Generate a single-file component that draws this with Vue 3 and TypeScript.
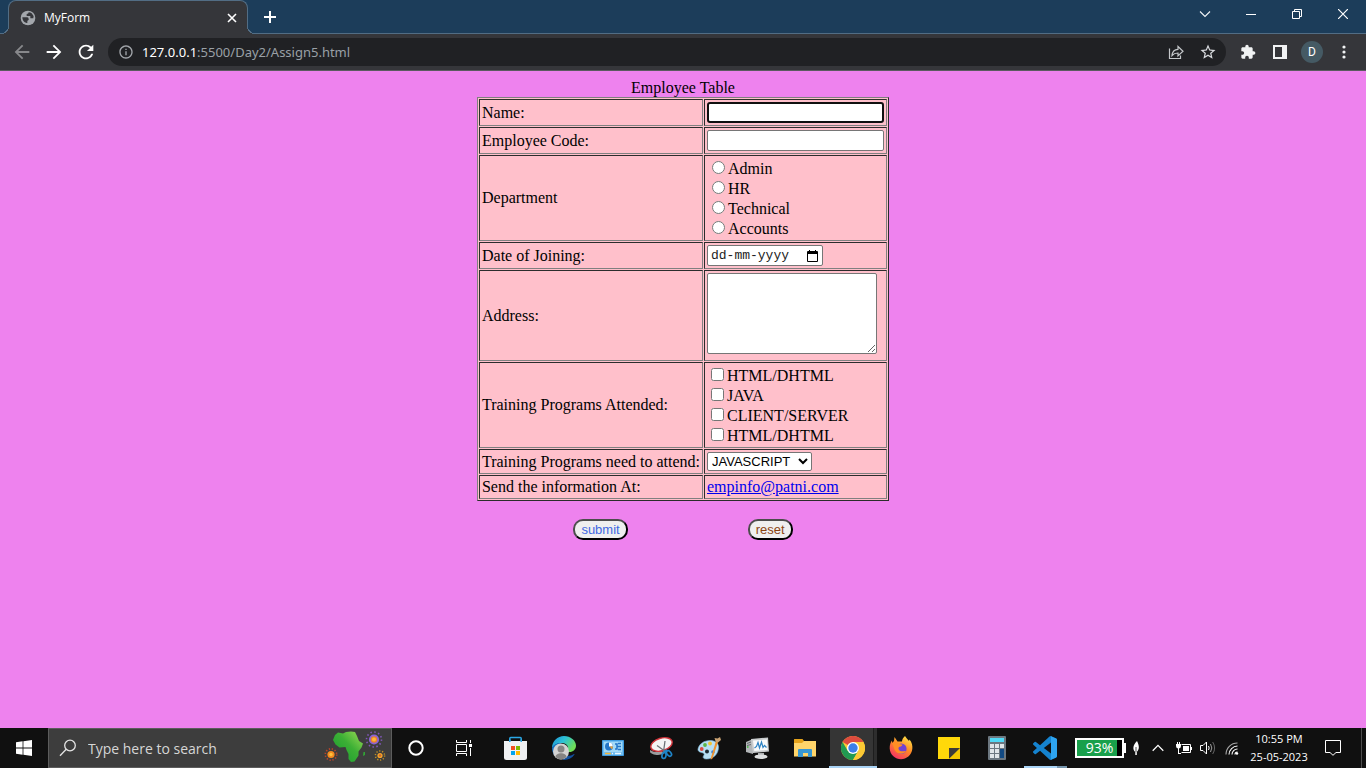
<script setup lang="ts">
import { ref } from 'vue'

const departments: string[] = ['Admin', 'HR', 'Technical', 'Accounts']
const trainings: string[] = ['HTML/DHTML', 'JAVA', 'CLIENT/SERVER', 'HTML/DHTML']
const programs: string[] = ['JAVASCRIPT']

const department = ref<string>('')
const attended = ref<number[]>([])
const program = ref<string>(programs[0])
</script>

<template>
  <div class="desktop">
    <header class="tabstrip">
      <div class="tab">
        <svg class="favicon" viewBox="0 0 24 24" aria-hidden="true">
          <circle cx="12" cy="12" r="11" fill="#a3a7ac" />
          <path d="M3.500 11l7.500 0q2 .5 2 2.500v1.500q-2 .3-2 2v2.500h-1Q3.500 18 3.500 11zM13 3.500q0 2.500-3 2.500v3h5.500v3.500h4.500q1-4.500-2.500-7.500-2-1.500-4.500-1.500z" fill="#35363a" />
        </svg>
        <span class="tab-title">MyForm</span>
        <button class="plain tab-close" type="button" aria-label="Close tab">
          <svg width="10" height="10" viewBox="0 0 10 10"><path d="M1 1l8 8M9 1l-8 8" stroke="#fff" stroke-width="1.600" /></svg>
        </button>
      </div>
      <button class="plain new-tab" type="button" aria-label="New tab">
        <svg width="12" height="12" viewBox="0 0 12 12"><path d="M6 0v12M0 6h12" stroke="#fff" stroke-width="2" /></svg>
      </button>
      <div class="window-controls">
        <button class="plain" type="button" aria-label="Search tabs">
          <svg width="12" height="12" viewBox="0 0 12 12"><path d="M1 3.500l5 5 5-5" fill="none" stroke="#f2f5f7" stroke-width="1.100" /></svg>
        </button>
        <button class="plain" type="button" aria-label="Minimize">
          <svg width="10" height="10" viewBox="0 0 10 10"><path d="M0 5.500h10" stroke="#fff" /></svg>
        </button>
        <button class="plain" type="button" aria-label="Restore">
          <svg width="10" height="10" viewBox="0 0 10 10"><path d="M.5 2.500h7v7h-7zM2.500 2.500v-2h7v7h-2" fill="none" stroke="#fff" /></svg>
        </button>
        <button class="plain" type="button" aria-label="Close">
          <svg width="10" height="10" viewBox="0 0 10 10"><path d="M0 0l10 10M10 0L0 10" stroke="#fff" stroke-width="1.200" /></svg>
        </button>
      </div>
    </header>

    <nav class="toolbar">
      <button class="plain tool" type="button" aria-label="Back">
        <svg width="22" height="22" viewBox="0 0 24 24" fill="#87888b"><path d="M20 11H7.830l5.590-5.590L12 4l-8 8 8 8 1.410-1.410L7.830 13H20v-2z" /></svg>
      </button>
      <button class="plain tool" type="button" aria-label="Forward">
        <svg width="22" height="22" viewBox="0 0 24 24" fill="#fff"><path d="M12 4l-1.410 1.410L16.170 11H4v2h12.170l-5.580 5.590L12 20l8-8z" /></svg>
      </button>
      <button class="plain tool" type="button" aria-label="Reload">
        <svg width="22" height="22" viewBox="0 0 24 24" fill="#fff"><path d="M17.650 6.350C16.200 4.900 14.210 4 12 4c-4.420 0-7.990 3.580-7.990 8s3.570 8 7.990 8c3.730 0 6.840-2.550 7.730-6h-2.080c-.82 2.330-3.040 4-5.650 4-3.310 0-6-2.690-6-6s2.690-6 6-6c1.660 0 3.140.69 4.220 1.780L13 11h7V4l-2.350 2.350z" /></svg>
      </button>
      <div class="omnibox">
        <button class="plain" type="button" aria-label="Site information">
          <svg width="16" height="16" viewBox="0 0 24 24" fill="#a3a7ac"><path d="M11 7h2v2h-2zm0 4h2v6h-2zm1-9C6.480 2 2 6.480 2 12s4.480 10 10 10 10-4.480 10-10S17.520 2 12 2zm0 18c-4.410 0-8-3.590-8-8s3.590-8 8-8 8 3.590 8 8-3.590 8-8 8z" /></svg>
        </button>
        <button class="plain url" type="button"><span class="host">127.0.0.1</span>:5500/Day2/Assign5.html</button>
        <button class="plain tool" type="button" aria-label="Share">
          <svg width="16" height="16" viewBox="0 0 16 16" fill="none" stroke="#c4c7ca" stroke-width="1.200"><path d="M1.500 4.500v10h11V11.500" /><path d="M4 11.500c.3-3.700 2-6 6-6.200V2.500l5 4.700-5 4.700V9c-2.800 0-4.500.7-6 2.500z" /></svg>
        </button>
        <button class="plain tool" type="button" aria-label="Bookmark">
          <svg width="18" height="18" viewBox="0 0 24 24" fill="#dadce0"><path d="M22 9.240l-7.190-.62L12 2 9.190 8.630 2 9.240l5.460 4.730L5.820 21 12 17.270 18.180 21l-1.630-7.030L22 9.240zM12 15.400l-3.760 2.270 1-4.280-3.320-2.880 4.380-.38L12 6.100l1.710 4.040 4.380.38-3.320 2.880 1 4.280L12 15.400z" /></svg>
        </button>
      </div>
      <button class="plain tool" type="button" aria-label="Extensions">
        <svg width="16" height="16" viewBox="0 0 24 24" fill="#f1f3f4"><path d="M20.500 11H19V7c0-1.100-.9-2-2-2h-4V3.500C13 2.120 11.880 1 10.500 1S8 2.120 8 3.500V5H4c-1.100 0-1.990.9-1.990 2v3.800H3.500c1.490 0 2.700 1.210 2.700 2.700s-1.210 2.700-2.700 2.700H2V20c0 1.100.9 2 2 2h3.800v-1.500c0-1.490 1.210-2.700 2.700-2.700 1.490 0 2.700 1.210 2.700 2.700V22H17c1.100 0 2-.9 2-2v-4h1.500c1.380 0 2.500-1.120 2.500-2.500S21.880 11 20.500 11z" /></svg>
      </button>
      <button class="plain tool" type="button" aria-label="Side panel">
        <svg width="14" height="14" viewBox="0 0 14 14"><path d="M0 0h14v14H0zM2 2v10h7V2z" fill="#f1f3f4" fill-rule="evenodd" /></svg>
      </button>
      <button class="plain tool" type="button" aria-label="Profile"><span class="avatar">D</span></button>
      <button class="plain tool" type="button" aria-label="Menu">
        <svg width="4" height="14" viewBox="0 0 4 14" fill="#f1f3f4"><circle cx="2" cy="2" r="1.600" /><circle cx="2" cy="7" r="1.600" /><circle cx="2" cy="12" r="1.600" /></svg>
      </button>
    </nav>

    <main class="page">
      <form @submit.prevent>
        <table class="employee">
          <caption>Employee Table</caption>
          <tbody>
            <tr>
              <td><label for="name">Name:</label></td>
              <td><input id="name" class="field focused" type="text" /></td>
            </tr>
            <tr>
              <td><label for="code">Employee Code:</label></td>
              <td><input id="code" class="field" type="text" /></td>
            </tr>
            <tr>
              <td>Department</td>
              <td>
                <label v-for="d in departments" :key="d" class="option">
                  <input v-model="department" type="radio" name="department" :value="d" />{{ d }}
                </label>
              </td>
            </tr>
            <tr>
              <td><label for="joined">Date of Joining:</label></td>
              <td>
                <div class="date">
                  <input id="joined" type="text" placeholder="dd-mm-yyyy" />
                  <button class="plain" type="button" aria-label="Open calendar">
                    <svg width="11" height="12" viewBox="0 0 11 12"><path d="M1 1h1V0h1v1h5V0h1v1h1q1 0 1 1v9q0 1-1 1H1q-1 0-1-1V2q0-1 1-1zM1 4v7h9V4z" fill="#000" fill-rule="evenodd" /></svg>
                  </button>
                </div>
              </td>
            </tr>
            <tr>
              <td><label for="address">Address:</label></td>
              <td><textarea id="address"></textarea></td>
            </tr>
            <tr>
              <td>Training Programs Attended:</td>
              <td>
                <label v-for="(t, i) in trainings" :key="i" class="option">
                  <input v-model="attended" type="checkbox" :value="i" />{{ t }}
                </label>
              </td>
            </tr>
            <tr>
              <td><label for="program">Training Programs need to attend:</label></td>
              <td>
                <select id="program" v-model="program">
                  <option v-for="p in programs" :key="p" :value="p">{{ p }}</option>
                </select>
              </td>
            </tr>
            <tr>
              <td>Send the information At:</td>
              <td><a href="mailto:empinfo@patni.com">empinfo@patni.com</a></td>
            </tr>
          </tbody>
        </table>
        <div class="actions">
          <button class="pill submit" type="submit">submit</button>
          <button class="pill reset" type="reset">reset</button>
        </div>
      </form>
    </main>

    <footer class="taskbar">
      <button class="plain task" type="button" aria-label="Start">
        <svg width="16" height="16" viewBox="0 0 16 16" fill="#fff"><path d="M0 2.200L6.600 1.300v6.300H0zM7.400 1.200L16 0v7.600H7.400zM0 8.400h6.600v6.300L0 13.800zM7.400 8.400H16V16l-8.600-1.200z" /></svg>
      </button>
      <div class="search">
        <svg width="18" height="18" viewBox="0 0 18 18" fill="none" stroke="#e4e4e4" stroke-width="1.300"><circle cx="11" cy="6.500" r="5.300" /><path d="M7.200 10.300L1 16.800" /></svg>
        <input type="text" placeholder="Type here to search" aria-label="Search" />
        <svg width="64" height="34" viewBox="0 0 64 34" aria-hidden="true">
          <defs><linearGradient id="land" x1="0" y1="1" x2="1" y2="0"><stop offset="0" stop-color="#129a2e" /><stop offset=".55" stop-color="#3caf35" /><stop offset="1" stop-color="#9ddb55" /></linearGradient></defs>
          <path d="M9 9l2-5 3-2.500 5 1L22 1l5-.5 4 .5 2 4 2 5 4 2.500-1.500 4-3 4v4l-4 6-3.500.5-2.500-3v-5l-2-4-1-3-6 .5-4-3z" fill="url(#land)" />
          <path d="M39.500 21l1.500 0v3l-2 1z" fill="#31a535" />
          <circle cx="50" cy="8.500" r="7.500" fill="none" stroke="#8057b8" stroke-width="1.600" stroke-dasharray="1.500 2.430" />
          <circle cx="50" cy="8.500" r="4.200" fill="#e8842c" stroke="#8b63d6" stroke-width="1.800" /><circle cx="50" cy="8.500" r="2" fill="#ffb637" />
          <circle cx="7" cy="23.500" r="5.700" fill="none" stroke="#b9452a" stroke-width="1.600" stroke-dasharray="1.300 1.690" />
          <circle cx="7" cy="23.500" r="3.600" fill="#f58a1f" /><circle cx="7" cy="23.500" r="1.700" fill="#ffc13d" />
          <circle cx="56" cy="24.500" r="4.600" fill="none" stroke="#c39124" stroke-width="1.500" stroke-dasharray="1.200 1.700" />
          <circle cx="56" cy="24.500" r="2.600" fill="#f3a52c" /><circle cx="56" cy="24.500" r="1.200" fill="#d0662a" />
        </svg>
      </div>
      <button class="plain task" type="button" aria-label="Cortana">
        <svg width="16" height="16" viewBox="0 0 16 16"><circle cx="8" cy="8" r="6.700" fill="none" stroke="#fff" stroke-width="2" /></svg>
      </button>
      <button class="plain task" type="button" aria-label="Task view">
        <svg width="16" height="16" viewBox="0 0 16 16" fill="none" stroke="#fff"><path d="M.5 0v2.500h10V0M.5 16v-2.500h10V16M.5 4.500h10v7H.5zM14.500 0v3M14.500 8v8" /><path d="M13 4h3v3h-3z" fill="#fff" stroke="none" /></svg>
      </button>

      <div class="pinned">
        <button class="plain task" type="button" aria-label="Microsoft Store">
          <svg width="24" height="24" viewBox="0 0 24 24"><path d="M6.800 7V2.500c0-.6.300-.9.900-.9h9.600c.6 0 .9.300.9.900V7" fill="none" stroke="#2ba8e6" stroke-width="1.500" /><path d="M1 5h23v16.500q0 2.500-2.500 2.500h-18Q1 24 1 21.500z" fill="#f0f1f3" /><path d="M6.800 6V3.500M18.200 6V3.500" stroke="#2ba8e6" stroke-width="1.500" /><path fill="#f25022" d="M8 10h4v4H8z" /><path fill="#7fba00" d="M13 10h4v4h-4z" /><path fill="#00a4ef" d="M8 15h4v4H8z" /><path fill="#ffb900" d="M13 15h4v4h-4z" /></svg>
        </button>
        <button class="plain task" type="button" aria-label="Microsoft Edge">
          <svg width="24" height="24" viewBox="0 0 24 24"><defs><linearGradient id="edge" x1="0" y1="0" x2="1" y2=".5"><stop offset="0" stop-color="#1c8fd8" /><stop offset=".5" stop-color="#2dc2d6" /><stop offset="1" stop-color="#6fdd56" /></linearGradient></defs><path d="M0 12C0 5 5.500 0 12 0s12 4.500 12 9.500c0 4-3 6.500-6.500 6.500-1.500 0-2.500-.5-2.500-1.300 0-1 1-1.200 1-3C16 9 13 7 9.500 7 5 7 1 10 0 12z" fill="url(#edge)" /><path d="M0 12c1-3 5-5 9-5-2 2-3 4-2 9l2 7C3.500 22 0 17.500 0 12z" fill="#1670c4" /><path d="M12 19c3 1.500 7 1 10-1 .5 0 .6.4.3.800-2.500 3.600-6.500 5.400-11.300 5.200z" fill="#124f9c" /><circle cx="9" cy="15.500" r="8" fill="#d4d3d2" /><circle cx="9" cy="13" r="3.500" fill="#858483" /><path d="M3.500 21c.3-5 10.700-5 11 0-3 3.200-8 3.200-11 0z" fill="#858483" /></svg>
        </button>
        <button class="plain task" type="button" aria-label="Control Panel">
          <svg width="24" height="24" viewBox="0 0 24 24"><path d="M1.500 4.500h21v15h-21z" fill="#71bdf0" stroke="#3d9adf" /><path d="M3 6h18v10H3z" fill="#a2daf8" /><circle cx="8" cy="10.500" r="4" fill="#2476c8" /><path d="M8 10.500v-4a4 4 0 0 1 3.800 4z" fill="#fff" /><path d="M8.500 10.500h3.300a4 4 0 0 1-1 2.800z" fill="#f3a12f" /><path d="M14 8h2v5h-2M16 10.500h4M17 7.500h3M17 13.500h3" fill="none" stroke="#2476c8" stroke-width="1.500" /><path d="M4 17.500h6" stroke="#f4b63e" stroke-width="1.500" /><path d="M11 17.500h1M14 17.500h6" stroke="#e9f7ff" stroke-width="1.500" /></svg>
        </button>
      </div>
      <button class="plain task" type="button" aria-label="Snipping Tool">
        <svg width="24" height="24" viewBox="0 0 24 24"><path d="M1 14c3 2 7 3 12 1l2 3-6 1c-4 0-7.500-1.500-8-3z" fill="#9a9c9e" /><ellipse cx="12.500" cy="8.500" rx="11" ry="6.300" transform="rotate(-17 12.500 8.500)" fill="#f4f4f4" stroke="#d2343b" stroke-width="1.400" /><path d="M8 9.500l9 6.500M16 5l-1.500 11" stroke="#6e7377" stroke-width="1.300" fill="none" /><g fill="none" stroke="#1f84c8" stroke-width="1.700"><ellipse cx="15" cy="19.500" rx="2" ry="3" transform="rotate(12 15 19.500)" /><ellipse cx="20" cy="17.500" rx="2" ry="3" transform="rotate(-40 20 17.500)" /><path d="M15 16l3-2" /></g></svg>
      </button>
      <button class="plain task" type="button" aria-label="Paint">
        <svg width="24" height="24" viewBox="0 0 24 24"><path d="M1 13C2 8 7 4.500 13 4.500c5 0 8.500 2.500 8.500 6.500 0 7-5 12-12 12-3 0-4-1.500-3-3s1-2.500-.5-3S.5 16 1 13z" fill="#b7dff4" stroke="#7fbbdd" stroke-width=".6" /><circle cx="4.700" cy="13" r="1.900" fill="#dc4b43" /><circle cx="8" cy="9" r="1.900" fill="#5bb545" /><circle cx="13" cy="7.500" r="1.900" fill="#f2c230" /><circle cx="10" cy="15.500" r="2" fill="#1c2a33" /><circle cx="16" cy="16" r="1.800" fill="#3d7fd0" /><path d="M19 5l2 1-5.500 16.500-1.800 1.200.3-2.200z" fill="#ee9330" /><path d="M17.500 2l3 .5 2.500-1.500 1 3-3 2.500-2.300-.7z" fill="#c9a273" /></svg>
      </button>
      <button class="plain task" type="button" aria-label="Task Manager">
        <svg width="24" height="24" viewBox="0 0 24 24"><path d="M1 6l7-3v15l-7-2z" fill="#b3b6b8" /><path d="M2 7.500l4-1.500M2 9.500l4-1" stroke="#656a6d" /><path d="M2 11h1.500" stroke="#38b838" stroke-width="1.500" /><path d="M6 3l17-1.500 1 14L8 17z" fill="#c9ccce" /><path d="M8 4.500l14-1 .7 10.500L9.300 15z" fill="#fafafa" /><path d="M9.500 12l2-1.500 1.500-4 1.500 5.500 2-6 1.500 5.500 1.500-2 2 2" fill="none" stroke="#2d83c4" stroke-width="1.200" /><path d="M13 17h6v3h-6z" fill="#aeb1b3" /><ellipse cx="16" cy="20.700" rx="6.500" ry="2.300" fill="#dddfe0" /></svg>
      </button>
      <button class="plain task" type="button" aria-label="File Explorer">
        <svg width="24" height="24" viewBox="0 0 24 24"><path d="M1 3.500q0-.5.500-.5h8l1.500 2h11q1 0 1 1v4H1z" fill="#e5a21b" /><path d="M1 7h8l2-2h12v15.500H1z" fill="#ffd56b" /><path d="M5 21v-7q0-1 1-1h12q1 0 1 1v7h-4v-4h-5v4z" fill="#3797d3" /></svg>
      </button>
      <button class="plain task active" type="button" aria-label="Google Chrome">
        <svg width="24" height="24" viewBox="0 0 24 24"><circle cx="12" cy="12" r="12" fill="#fcc934" /><path d="M12 12L1.600 6A12 12 0 0 1 22.400 6H12z" fill="#dd4b3e" /><path d="M1.600 6A12 12 0 0 0 12 24l5.200-9L12 12 6.800 15z" fill="#219a52" /><path d="M12 6h10.400A12 12 0 0 1 12 24l5.200-9z" fill="#fcc934" /><circle cx="12" cy="12" r="6" fill="#fff" /><circle cx="12" cy="12" r="4.700" fill="#3c7ee8" /></svg>
      </button>
      <button class="plain task" type="button" aria-label="Firefox">
        <svg width="24" height="24" viewBox="0 0 24 24"><defs><linearGradient id="fox" x1=".8" y1="0" x2=".2" y2="1"><stop offset="0" stop-color="#ffe646" /><stop offset=".45" stop-color="#ff8a26" /><stop offset="1" stop-color="#f5296a" /></linearGradient></defs><path d="M16 0c1.500 2.200 2.500 3.200 4 5l.5-1.500C23 6.500 23.700 10 23.300 13 22.500 19 17.500 23.300 12 23.300S1 19 .7 12.500C.6 9 1.500 6.500 3 4.500L3.200 7 5 5l.5-4 3 4.500h4.500C13 3.500 14.300 1.300 16 0z" fill="url(#fox)" /><circle cx="12.300" cy="12.800" r="5.300" fill="#7142d2" /><path d="M3 7c3-1.500 5.500-1 7 1l3.500.5c-.5 2-2.500 2.200-3.500 2.500-1.200 1.300-.5 3.500 2 4.200 2 .5 3.500-.7 5-.2-1.200 3-8 4.300-11-.5C4.500 12 4.500 9 3 7z" fill="#ff8d24" /></svg>
      </button>
      <button class="plain task" type="button" aria-label="Sticky Notes">
        <svg width="24" height="24" viewBox="0 0 24 24"><path d="M1 1h22v22H1z" fill="#ffd80a" /><path d="M12 12h11v1L12 23z" fill="#3b3a38" /><path d="M23 12v11H12z" fill="#f2c600" /></svg>
      </button>
      <button class="plain task" type="button" aria-label="Calculator">
        <svg width="24" height="24" viewBox="0 0 24 24"><rect x="3" width="18" height="24" rx="1" fill="#6c7780" /><path d="M5 2h14v4H5z" fill="#50d9f6" /><path d="M5 8h4v4H5zM10 8h4v4h-4zM15 8h4v4h-4zM5 13h4v4H5zM10 13h4v4h-4zM5 18h4v4H5zM10 18h4v4h-4z" fill="#e0e5e8" /><path d="M15 13h4v9h-4z" fill="#124a83" /></svg>
      </button>
      <button class="plain task running" type="button" aria-label="Visual Studio Code">
        <svg width="24" height="24" viewBox="0 0 24 24"><path d="M23.150 2.587L18.210.21a1.494 1.494 0 0 0-1.705.29l-9.460 8.630-4.120-3.128a.999.999 0 0 0-1.276.057L.327 7.261A1 1 0 0 0 .326 8.740L3.899 12 .326 15.260a1 1 0 0 0 .001 1.479L1.650 17.940a.999.999 0 0 0 1.276.057l4.120-3.128 9.460 8.630a1.492 1.492 0 0 0 1.704.29l4.942-2.377A1.500 1.500 0 0 0 24 20.060V3.939a1.500 1.500 0 0 0-.85-1.352zm-5.146 14.861L10.826 12l7.178-5.448v10.896z" fill="#1583cf" /><path d="M18 .2l5.150 2.387q.85.500.85 1.352V20.060q0 .9-.85 1.352L18 23.800z" fill="#2ea4f0" /></svg>
      </button>

      <div class="tray">
        <div class="battery"><span class="charge">93%</span></div>
        <svg class="leaf" width="8" height="14" viewBox="0 0 8 14" fill="#fff"><path d="M5 0c2 4 3 8-.2 11V14H3.300v-3C.2 8.500 1 4 5 0z" /><path d="M4 6v5" stroke="#101010" stroke-width=".7" /></svg>
        <button class="plain chevron" type="button" aria-label="Show hidden icons">
          <svg width="12" height="8" viewBox="0 0 12 8"><path d="M.7 6.700L6 1.400l5.300 5.300" fill="none" stroke="#fff" stroke-width="1.300" /></svg>
        </button>
        <button class="plain" type="button" aria-label="Battery">
          <svg width="16" height="12" viewBox="0 0 16 12"><path d="M5.500 2.500h9v8h-9" fill="none" stroke="#fff" /><path d="M7 4h6v5H7zM15 5h1v3h-1zM0 2h5v2q0 2-2 2.500V11h2v1H2V6.500Q0 6 0 4zM1 0h1v2H1zM3 0h1v2H3z" fill="#fff" /></svg>
        </button>
        <button class="plain" type="button" aria-label="Volume">
          <svg width="16" height="14" viewBox="0 0 16 14" fill="none" stroke="#fff"><path d="M.5 4.500h2.500L6.500 1v12L3 9.500H.5z" /><path d="M8.500 5q1.300 2 0 4" /><path d="M10.500 3q2.600 4 0 8" stroke="#a0a0a0" /><path d="M12.700 1q3.800 6 0 12" stroke="#666" /></svg>
        </button>
        <button class="plain" type="button" aria-label="Network">
          <svg width="14" height="14" viewBox="0 0 14 14" fill="none" stroke="#fff" stroke-width="1.100"><path d="M1 13.500C1 7 6 2 12.500 2" stroke="#a8a8a8" /><path d="M4 13.500C4 9 8 5 12.500 5M7 13.500C7 10.500 9.500 8 12.500 8M10 13.500c0-1.500 1-2.500 2.500-2.500" /><circle cx="12" cy="12.500" r="1.200" fill="#fff" stroke="none" /></svg>
        </button>
        <button class="plain clock" type="button"><span>10:55 PM</span><span>25-05-2023</span></button>
        <button class="plain notify" type="button" aria-label="Notifications">
          <svg width="16" height="16" viewBox="0 0 16 16"><path d="M.5.500h15v12H11L8 15.300 5 12.500H.5z" fill="none" stroke="#fff" /></svg>
        </button>
      </div>
    </footer>
  </div>
</template>

<style>
body {
  margin: 0;
}
</style>

<style scoped>
.desktop {
  display: flex;
  flex-direction: column;
  min-height: 100vh;
  background: violet;
  font-family: "Open Sans", "Noto Sans", sans-serif;
}
.desktop * {
  box-sizing: border-box;
}
svg {
  display: block;
  flex: none;
}
.plain {
  display: flex;
  align-items: center;
  justify-content: center;
  padding: 0;
  border: 0;
  background: none;
  color: inherit;
  font: inherit;
}

/* Tab strip */
.tabstrip {
  display: flex;
  height: 34px;
  padding-left: 8px;
  background: #1c3d5a;
  box-shadow: inset 0 -1px #526d84;
}
.tab {
  position: relative;
  display: flex;
  align-items: center;
  width: 240px;
  padding: 0 10px 0 11px;
  border: 1px solid #526d84;
  border-bottom: 0;
  border-radius: 8px 8px 0 0;
  background: #35363a;
  color: #fff;
}
.tab::before,
.tab::after {
  content: "";
  position: absolute;
  bottom: 0;
  width: 8px;
  height: 8px;
}
.tab::before {
  left: -8px;
  background: radial-gradient(circle at 0 0, #1c3d5a 7px, #526d84 7px 8px, #35363a 8px);
}
.tab::after {
  right: -8px;
  background: radial-gradient(circle at 100% 0, #1c3d5a 7px, #526d84 7px 8px, #35363a 8px);
}
.favicon {
  width: 16px;
  height: 16px;
}
.tab-title {
  flex: 1;
  padding-left: 8px;
  font-size: 12px;
}
.new-tab {
  width: 28px;
  margin-left: 8px;
}
.window-controls {
  display: flex;
  height: 28px;
  margin-left: auto;
}
.window-controls .plain {
  width: 46px;
}

/* Toolbar */
.toolbar {
  display: flex;
  align-items: center;
  height: 37px;
  padding: 0 6px;
  border-bottom: 1px solid #5b5a60;
  background: #35363a;
}
.tool {
  width: 32px;
  height: 28px;
}
.omnibox {
  display: flex;
  flex: 1;
  align-items: center;
  height: 28px;
  margin: 0 6px;
  padding: 0 2px 0 10px;
  border-radius: 14px;
  background: #202124;
}
.url {
  flex: 1;
  justify-content: flex-start;
  padding-left: 8px;
  color: #9aa0a6;
  font-size: 13px;
  font-family: "Noto Sans", "Open Sans", sans-serif;
}
.host {
  color: #fff;
}
.avatar {
  width: 22px;
  height: 22px;
  border-radius: 50%;
  background: #455a64;
  color: #fff;
  font: 12px/22px Roboto, sans-serif;
}

/* Employee form */
.page {
  flex: 1;
  padding: 8px;
  color: #000;
  font: 16px/18px "Liberation Serif", serif;
}
.employee {
  margin: 0 auto;
  border: 1px solid;
  border-color: #808080 #2c2c2c #2c2c2c #808080;
  border-spacing: 1px;
  background: pink;
}
.employee td {
  padding: 2px;
  border: 1px solid;
  border-color: #2c2c2c #808080 #808080 #2c2c2c;
}
.field,
.date,
textarea,
select {
  display: block;
  margin: 0;
  border: 1px solid #767676;
  border-radius: 2px;
  background: #fff;
}
.field {
  width: 177px;
  height: 21px;
}
.focused,
.focused:focus {
  border: 2px solid #101010;
  border-radius: 3px;
  outline: none;
}
.option {
  display: flex;
  align-items: flex-start;
  height: 20px;
  line-height: 22px;
}
.option input {
  width: 13px;
  height: 13px;
  margin: 3px 3px 0 4px;
}
.option input[type="radio"] {
  margin-left: 5px;
}
.date {
  display: flex;
  align-items: center;
  width: 116px;
  height: 21px;
  padding: 0 4px 0 3px;
}
.date input {
  flex: 1;
  min-width: 0;
  padding: 0;
  border: 0;
  outline: none;
  font: 13px "Liberation Mono", monospace;
}
.date input::placeholder {
  color: #222;
}
textarea {
  width: 170px;
  height: 81px;
  margin-bottom: 4px;
}
select {
  width: 105px;
  height: 19px;
  padding: 0;
  color: #000;
  font: 13px "Liberation Sans", sans-serif;
}
a {
  color: #0000ee;
}
.actions {
  display: flex;
  justify-content: center;
  gap: 120px;
  margin-top: 18px;
}
.pill {
  height: 21px;
  padding: 0 6px;
  border: 2px solid;
  border-color: #4c4c4c #000 #000 #4c4c4c;
  border-radius: 10px;
  background: #efefef;
  font: 13px "Liberation Sans", sans-serif;
}
.submit {
  color: royalblue;
}
.reset {
  color: saddlebrown;
}

/* Taskbar */
.taskbar {
  display: flex;
  height: 40px;
  background: #101010;
  color: #fff;
}
.task {
  flex: none;
  width: 48px;
  height: 40px;
}
.search {
  display: flex;
  align-items: center;
  width: 344px;
  padding: 0 3px 0 10px;
  border: 1px solid #5c5c5c;
  background: #3d3d3d;
}
.search input {
  flex: 1;
  min-width: 0;
  padding: 0 0 0 11px;
  border: 0;
  outline: none;
  background: none;
  color: #fff;
  font: 14px "Open Sans", sans-serif;
}
.search input::placeholder {
  color: #d6d6d6;
}
.pinned {
  display: flex;
  gap: 1px;
  margin-left: 3px;
}
.active {
  border-bottom: 2px solid #a9d3f5;
  background: linear-gradient(90deg, #101010 1px, #353535 1px 44px, #1d1d1d 44px 45px, #2d2d2d 45px);
  padding-top: 2px;
}
.running {
  padding-top: 2px;
  border-bottom: 2px solid;
  border-image: linear-gradient(90deg, transparent 5px, #a9d3f5 5px 35px, #7595ad 35px 44px, transparent 44px) 2;
}
.tray {
  display: flex;
  align-items: center;
  margin-left: auto;
  padding-right: 14px;
  background: linear-gradient(#4d4d4d, #4d4d4d) right 4px top / 1px 100% no-repeat;
}
.battery {
  position: relative;
  width: 49px;
  height: 20px;
  border: 2px solid #fff;
  background: linear-gradient(90deg, #18a04b 40px, #000 40px);
  font-size: 14px;
  line-height: 16px;
  text-align: center;
}
.battery::after {
  content: "";
  position: absolute;
  top: 3px;
  right: -4px;
  width: 2px;
  height: 10px;
  background: #fff;
}
.leaf {
  margin-left: 8px;
}
.chevron {
  margin-left: 4px;
}
.tray > .plain {
  width: 24px;
  height: 40px;
}
.tray > .chevron {
  width: 28px;
}
.tray > .clock {
  flex-direction: column;
  width: 70px;
  font-size: 11px;
  line-height: 18px;
}
.tray > .notify {
  width: 38px;
}
</style>
